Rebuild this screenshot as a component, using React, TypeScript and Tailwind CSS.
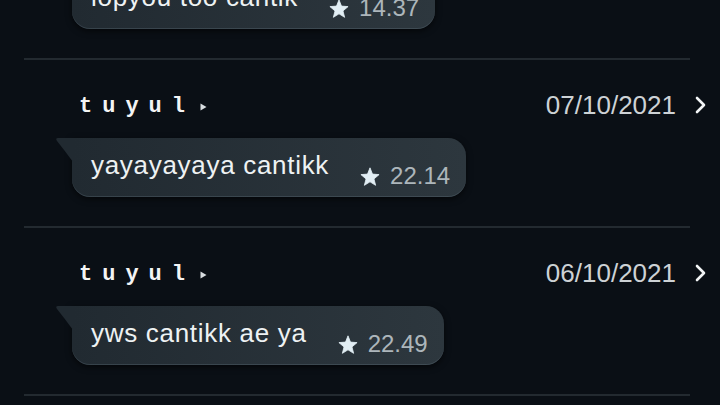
import React from 'react';

interface Message {
  date: string;
  text: string;
  time: string;
}

const messages: Message[] = [
  { date: '08/10/2021', text: 'lopyou too cantik', time: '14.37' },
  { date: '07/10/2021', text: 'yayayayaya cantikk', time: '22.14' },
  { date: '06/10/2021', text: 'yws cantikk ae ya', time: '22.49' },
];

function Star() {
  return (
    <svg width="20" height="19" viewBox="0 0 24 23" className="shrink-0">
      <polygon
        points="12,1 15,8.6 23,9.2 16.8,14.4 18.8,22.2 12,17.9 5.2,22.2 7.2,14.4 1,9.2 9,8.6"
        fill="#e2eef4"
        strokeLinejoin="round"
        stroke="#e2eef4"
        strokeWidth="1"
      />
    </svg>
  );
}

function Bubble({ text, time }: { text: string; time: string }) {
  return (
    <div className="relative inline-flex h-[59px] items-start rounded-[18px] rounded-tl-none bg-gradient-to-r from-[#212a31] to-[#2d373e] pl-[19px] pr-[16px] pt-[12px] shadow-[0_2px_6px_rgba(0,0,0,0.6),inset_0_-1px_0_rgba(120,140,150,0.25)]">
      {/* tail */}
      <svg
        width="18"
        height="24"
        viewBox="0 0 18 24"
        className="absolute left-[-17px] top-0"
      >
        <path d="M18 0 H3 Q0 0 2 3 Q10 13 18 24 Z" fill="#212a31" />
      </svg>
      <span
        className="text-[26px] leading-[30px] tracking-[0.7px] text-[#eef2f3]"
        style={{ fontFamily: '"Liberation Sans", Arial, sans-serif' }}
      >
        {text}
      </span>
      <div className="ml-[31px] mt-[12px] flex items-center gap-[10px]">
        <Star />
        <span
          className="text-[24px] leading-[28px] text-[#adb6bb]"
          style={{ fontFamily: '"Liberation Sans", Arial, sans-serif' }}
        >
          {time}
        </span>
      </div>
    </div>
  );
}

function Row({ message }: { message: Message }) {
  return (
    <div>
      <div className="pb-[29px] pl-[72px] pr-[14px] pt-[32px]">
        <div className="flex h-[26px] items-center justify-between">
          <div className="flex items-center pl-[7px] pt-[3px]">
            <span
              className="text-[22px] font-bold leading-[26px] tracking-[10px] text-[#f4f4f4]"
              style={{ fontFamily: '"Liberation Mono", "DejaVu Sans Mono", monospace' }}
            >
              tuyul
            </span>
            <svg width="7" height="8" viewBox="0 0 7 8" className="ml-[5px]">
              <path d="M0.5 0.5 L6.5 4 L0.5 7.5 Z" fill="#d8dde0" />
            </svg>
          </div>
          <div className="flex items-center gap-[19px]">
            <span
              className="text-[26px] leading-[26px] text-[#cdd2d5]"
              style={{ fontFamily: '"Liberation Sans", Arial, sans-serif' }}
            >
              {message.date}
            </span>
            <svg width="11" height="18" viewBox="0 0 11 18">
              <polyline
                points="2,2 9,9 2,16"
                fill="none"
                stroke="#f2f4f5"
                strokeWidth="2.6"
                strokeLinecap="round"
                strokeLinejoin="round"
              />
            </svg>
          </div>
        </div>
        <div className="mt-[20px] flex">
          <Bubble text={message.text} time={message.time} />
        </div>
      </div>
      <div className="ml-6 mr-[30px] h-[2px] bg-[#232a30]" />
    </div>
  );
}

export default function App() {
  return (
    <div className="h-[405px] w-[720px] overflow-hidden bg-[#0a0f15]">
      <div className="-mt-[108px]">
        {messages.map((m) => (
          <Row key={m.date} message={m} />
        ))}
      </div>
    </div>
  );
}
